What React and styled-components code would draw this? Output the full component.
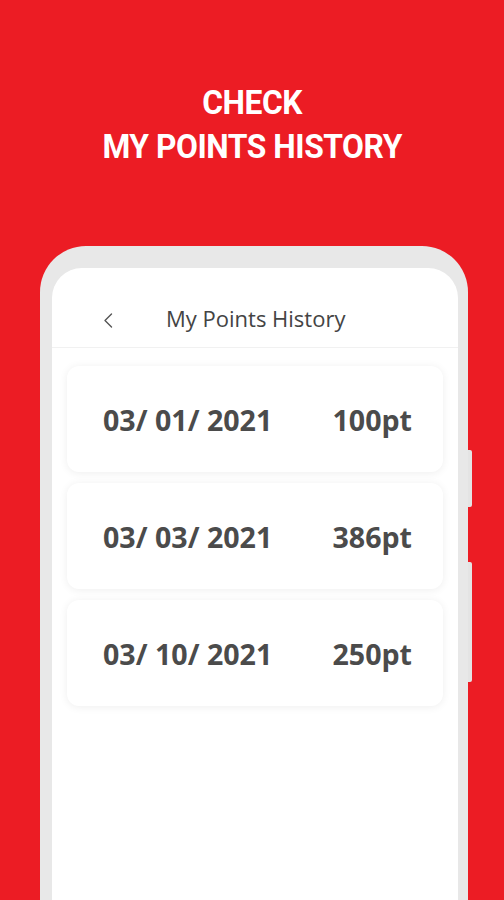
import React from "react";
import styled, { createGlobalStyle } from "styled-components";

const Global = createGlobalStyle`
  html, body { margin: 0; padding: 0; }
  body {
    background: #ec1c24;
    overflow: hidden;
  }
`;

const Page = styled.div`
  width: 504px;
  height: 900px;
  background: #ec1c24;
  display: flex;
  flex-direction: column;
  align-items: center;
  overflow: hidden;
`;

const Headline = styled.h1`
  margin: 0;
  padding-top: 80px;
  font-family: Roboto, "Liberation Sans", sans-serif;
  font-weight: 700;
  font-size: 34px;
  line-height: 44px;
  color: #ffffff;
  text-align: center;
  letter-spacing: -0.5px;
  transform: scaleX(0.935);
`;

const Frame = styled.div`
  position: relative;
  margin-top: 78px;
  margin-left: 4px;
  width: 428px;
  flex: 1;
  box-sizing: border-box;
  padding: 22px 10px 0 12px;
  background: #e8e8e8;
  border-radius: 46px 46px 0 0;
  display: flex;
`;

const SideButton = styled.div`
  position: absolute;
  right: -4px;
  top: ${(p) => p.$top}px;
  width: 4px;
  height: ${(p) => p.$h}px;
  background: #e4e4e4;
  border-radius: 0 2px 2px 0;
`;

const Screen = styled.div`
  flex: 1;
  background: #ffffff;
  border-radius: 30px 30px 0 0;
  display: flex;
  flex-direction: column;
`;

const Header = styled.div`
  display: flex;
  align-items: center;
  padding: 36px 0 14px 51px;
  border-bottom: 1px solid #f1f1f1;
`;

const Back = styled.svg`
  width: 10px;
  height: 15px;
  margin-right: 53px;
  margin-top: 3px;
`;

const HeaderTitle = styled.div`
  font-family: "Open Sans", "Liberation Sans", sans-serif;
  font-size: 22px;
  line-height: 29px;
  color: #444444;
`;

const List = styled.div`
  display: flex;
  flex-direction: column;
  gap: 11px;
  padding: 18px 15px 0 15px;
`;

const Card = styled.div`
  height: 106px;
  background: #ffffff;
  border-radius: 12px;
  box-shadow: 0 1px 8px rgba(0, 0, 0, 0.07);
  display: flex;
  align-items: center;
  justify-content: space-between;
  padding: 0 31px 0 36px;
  font-family: "Open Sans", "Liberation Sans", sans-serif;
  font-weight: 700;
  font-size: 28.6px;
  color: #4b4b4b;
`;

const rows = [
  { date: "03/ 01/ 2021", pts: "100pt" },
  { date: "03/ 03/ 2021", pts: "386pt" },
  { date: "03/ 10/ 2021", pts: "250pt" },
];

export default function App() {
  return (
    <Page>
      <Global />
      <Headline>
        CHECK
        <br />
        MY POINTS HISTORY
      </Headline>
      <Frame>
        <SideButton $top={204} $h={57} />
        <SideButton $top={316} $h={120} />
        <Screen>
          <Header>
            <Back viewBox="0 0 10 15">
              <path d="M8.5 1 L2 7.5 L8.5 14" fill="none" stroke="#555" strokeWidth="1.4" strokeLinecap="round" strokeLinejoin="round" />
            </Back>
            <HeaderTitle>My Points History</HeaderTitle>
          </Header>
          <List>
            {rows.map((r) => (
              <Card key={r.date}>
                <span>{r.date}</span>
                <span>{r.pts}</span>
              </Card>
            ))}
          </List>
        </Screen>
      </Frame>
    </Page>
  );
}
